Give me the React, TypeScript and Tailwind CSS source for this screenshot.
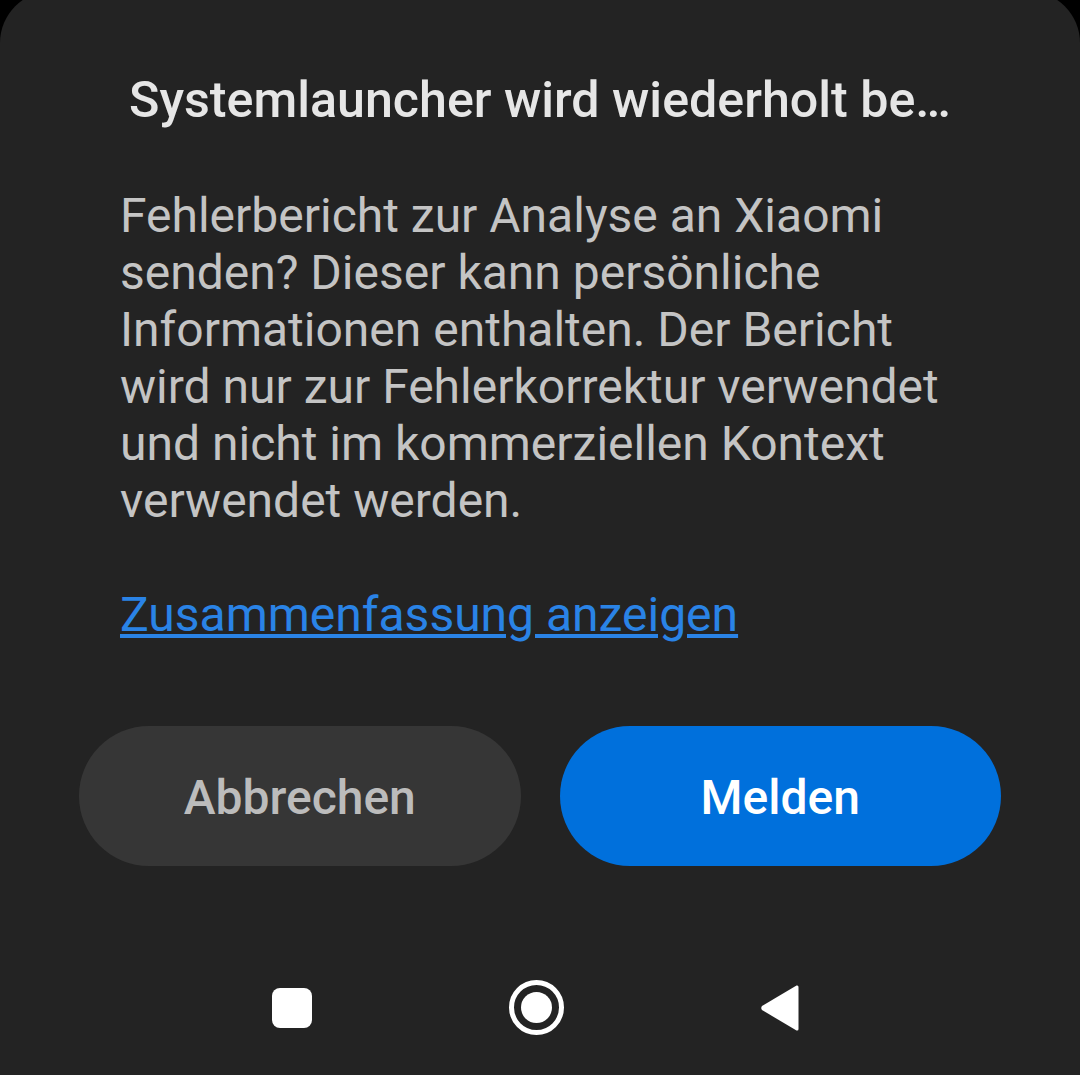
import React from 'react';

const App: React.FC = () => {
  return (
    <div className="w-[1080px] h-[1075px] bg-black overflow-hidden font-['Roboto',sans-serif]">
      <div className="-mt-[9px] h-[1084px] bg-[#232323] rounded-t-[52px] flex flex-col">
        <h1 className="mt-[79px] h-[60px] text-center text-[50.2px] leading-[60px] font-medium text-[#e6e6e6] whitespace-nowrap">
          Systemlauncher wird wiederholt be…
        </h1>
        <p className="mt-[57px] ml-[120px] text-[48px] leading-[57px] text-[#c4c4c4] whitespace-nowrap">
          Fehlerbericht zur Analyse an Xiaomi
          <br />
          senden? Dieser kann persönliche
          <br />
          Informationen enthalten. Der Bericht
          <br />
          wird nur zur Fehlerkorrektur verwendet
          <br />
          und nicht im kommerziellen Kontext
          <br />
          verwendet werden.
        </p>
        <a className="mt-[57px] ml-[120px] text-[48px] leading-[57px] text-[#2a83e6] underline whitespace-nowrap">
          Zusammenfassung anzeigen
        </a>
        <div className="mt-[83px] ml-[79px] mr-[79px] flex gap-[39px]">
          <button className="flex-1 h-[140px] pt-[4px] rounded-full bg-[#363636] text-[48px] font-medium text-[#bcbcbc]">
            Abbrechen
          </button>
          <button className="flex-1 h-[140px] pt-[4px] rounded-full bg-[#0070dc] text-[48px] font-medium text-white">
            Melden
          </button>
        </div>
        <div className="mt-[114px] flex justify-center items-center gap-[197px] pr-[9px]">
          <div className="w-[40px] h-[40px] rounded-[8px] bg-white" />
          <div className="w-[55px] h-[55px] rounded-full border-[5px] border-white flex items-center justify-center">
            <div className="w-[31px] h-[31px] rounded-full bg-white" />
          </div>
          <svg width="38" height="46" viewBox="0 0 38 46">
            <path d="M37.5 2 L37.5 44 Q37.5 46 35.5 45.5 L1 25 Q-0.5 23 1 21 L35.5 0.5 Q37.5 0 37.5 2 Z" fill="#fff" />
          </svg>
        </div>
      </div>
    </div>
  );
};

export default App;
